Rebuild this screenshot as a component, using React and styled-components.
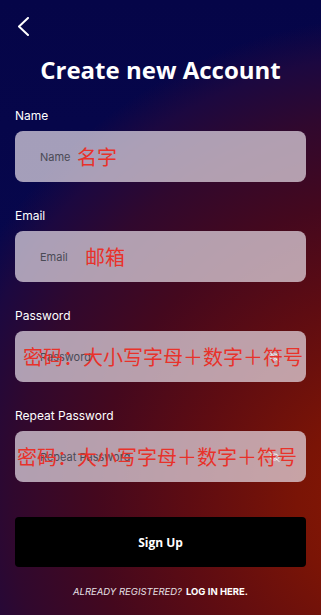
import React from 'react';
import styled, { createGlobalStyle } from 'styled-components';
import { EyeOff } from 'lucide-react';

const Global = createGlobalStyle`
    html, body {
        margin: 0;
        padding: 0;
        background: #06064a;
    }
    * {
        box-sizing: border-box;
    }
`

const Page = styled.div`
    width: 321px;
    min-height: 615px;
    font-family: Inter, "Noto Sans", sans-serif;
    color: #fff;
    background:
        radial-gradient(circle 490px at 405px 505px,
            #8c1a02 0%, #7a1406 22%, #5e0c12 44%, #44081e 63%, #30082e 80%, #1c0840 92%, rgba(8, 8, 74, 0) 100%),
        linear-gradient(180deg, #050548 0%, #08084e 60%, #120a4a 100%);
    display: flex;
    flex-direction: column;
    padding: 0 15px;
`

const TopBar = styled.div`
    height: 44px;
    display: flex;
    align-items: flex-start;
    padding-top: 17px;
    padding-left: 2px;
`

const Back = styled.button`
    background: none;
    border: none;
    padding: 0;
    width: 13px;
    height: 19px;
    display: flex;
    cursor: pointer;
`

const Title = styled.h1`
    margin: 10px 0 21px;
    font-family: "Open Sans", Lato, sans-serif;
    font-weight: 700;
    font-size: 24px;
    line-height: 32px;
    text-align: center;
`

const Form = styled.form`
    display: flex;
    flex-direction: column;
`

const Field = styled.div`
    display: flex;
    flex-direction: column;
    margin-bottom: 25px;
`

const Label = styled.label`
    font-size: 12px;
    line-height: 18px;
    margin-bottom: 6px;
`

const InputBox = styled.div`
    position: relative;
    height: 51px;
    border-radius: 8px;
    background: rgba(232, 224, 234, 0.7);
    display: flex;
    align-items: center;
    padding-left: 25px;
`

const Placeholder = styled.span`
    font-size: 11px;
    color: #4a4a55;
`

const Note = styled.span`
    position: absolute;
    top: 50%;
    left: ${p => p.$left}px;
    transform: translateY(-50%);
    font-family: "Noto Sans CJK SC", sans-serif;
    font-size: 20px;
    line-height: 1;
    color: #e8322a;
    white-space: nowrap;
    pointer-events: none;
`

const Eye = styled.span`
    position: absolute;
    right: 26px;
    top: 50%;
    transform: translateY(-50%);
    display: flex;
    color: #fff;
`

const SignUp = styled.button`
    margin-top: 10px;
    height: 50px;
    border: none;
    border-radius: 4px;
    background: #000;
    color: #fff;
    font-family: "Open Sans", Lato, sans-serif;
    font-weight: 700;
    font-size: 12px;
`

const Footer = styled.p`
    margin: 19px 0 0;
    text-align: center;
    font-size: 9.5px;
    line-height: 12px;
    text-transform: uppercase;
`

const Muted = styled.em`
    font-style: italic;
    color: #e6e0e6;
    margin-right: 4px;
`

const Strong = styled.strong`
    font-weight: 700;
`

const fields = [
    { label: 'Name', placeholder: 'Name', note: '名字', left: 62 },
    { label: 'Email', placeholder: 'Email', note: '邮箱', left: 70 },
    { label: 'Password', placeholder: 'Password', note: '密码：大小写字母＋数字＋符号', left: 8, eye: true },
    { label: 'Repeat Password', placeholder: 'Repeat Password', note: '密码：大小写字母＋数字＋符号', left: 2, eye: true },
]

function App() {
    return (
        <>
            <Global />
            <Page>
                <TopBar>
                    <Back aria-label="back">
                        <svg width="13" height="19" viewBox="0 0 13 19" fill="none">
                            <path d="M11 1 L2 9.5 L11 18" stroke="#fff" strokeWidth="2" strokeLinecap="round" strokeLinejoin="round" />
                        </svg>
                    </Back>
                </TopBar>

                <Title>Create new Account</Title>

                <Form>
                    {fields.map(f => (
                        <Field key={f.label}>
                            <Label>{f.label}</Label>
                            <InputBox>
                                <Placeholder>{f.placeholder}</Placeholder>
                                {f.eye && (
                                    <Eye>
                                        <EyeOff size={11} strokeWidth={2} />
                                    </Eye>
                                )}
                                <Note $left={f.left}>{f.note}</Note>
                            </InputBox>
                        </Field>
                    ))}

                    <SignUp type="button">Sign Up</SignUp>
                </Form>

                <Footer>
                    <Muted>Already registered?</Muted>
                    <Strong>Log in here.</Strong>
                </Footer>
            </Page>
        </>
    );
}

export default App;
